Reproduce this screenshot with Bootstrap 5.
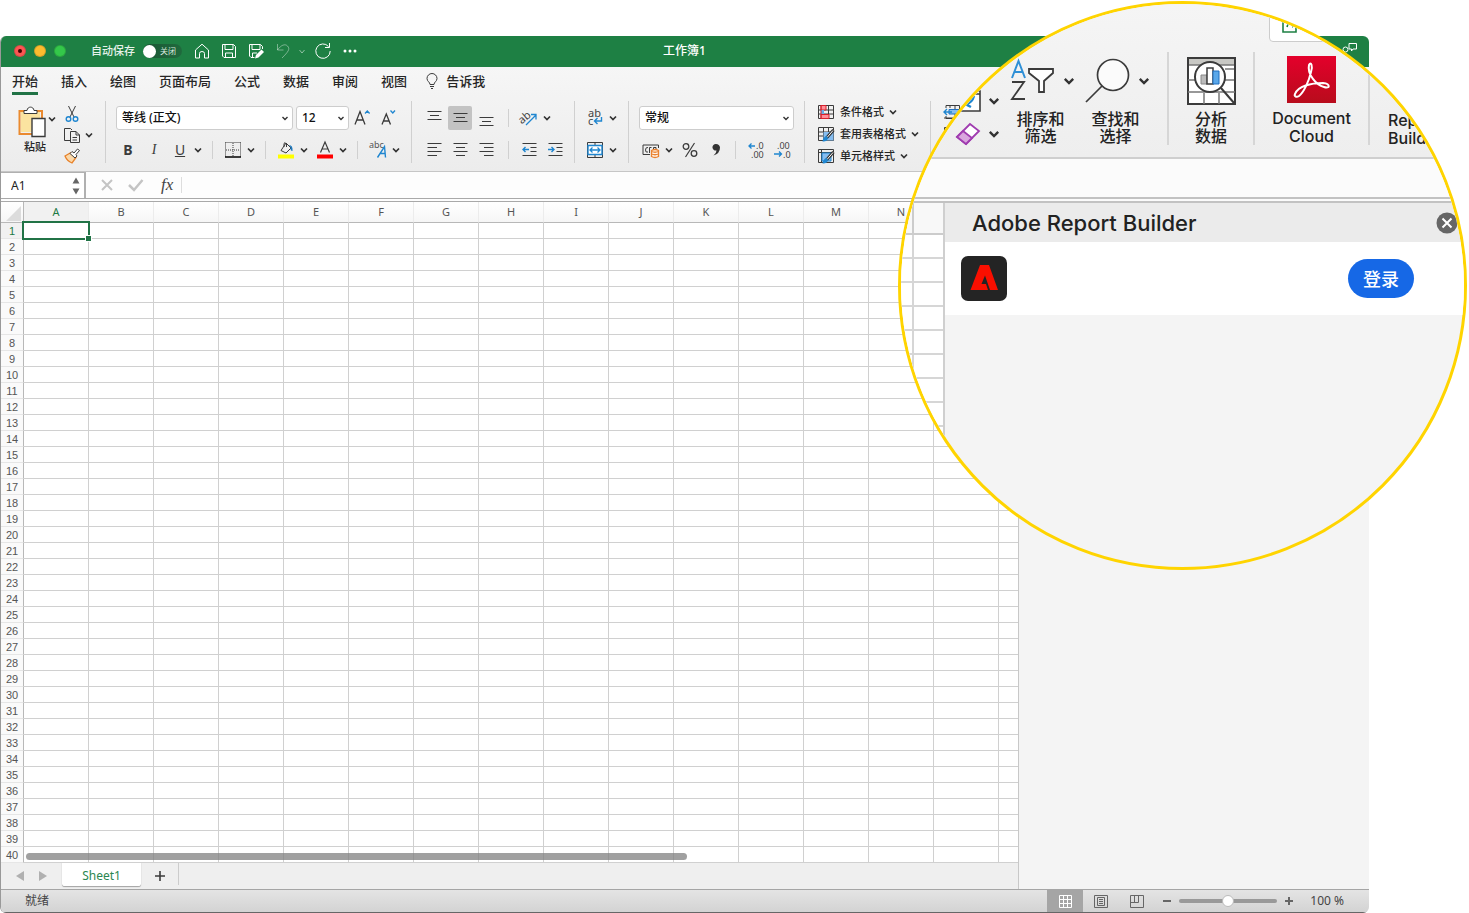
<!DOCTYPE html>
<html lang="zh-CN">
<head>
<meta charset="utf-8">
<meta name="viewport" content="width=device-width, initial-scale=1">
<title>工作簿1</title>
<link rel="stylesheet" href="https://cdn.jsdelivr.net/npm/bootstrap@5.3.0/dist/css/bootstrap.min.css">
<style>
  body { font-family: "Noto Sans", "Noto Sans CJK SC", sans-serif; font-size: 12px; line-height: 16px; color: #262626; background: #fff; }
  button { background: none; border: 0; padding: 0; color: inherit; font-weight: inherit; display: inline-flex; align-items: center; justify-content: center; }
  svg { display: block; flex: none; overflow: visible; fill: none; stroke: #3b3b3b; }
  .desk { padding: 36px 100px 0 0; overflow: hidden; }
  .win { border-left: 1px solid #999; border-radius: 6px; overflow: hidden; }

  .titlebar { height: 31px; background: #1e8044; color: #fff; margin-left: -1px; padding: 0 12px 1px 14px; }
  .titlebar svg { stroke: #fff; }
  .doctitle { font-weight: 500; }
  .lamp { width: 12px; height: 12px; border-radius: 50%; border: 1px solid rgba(0,0,0,.15); }
  .lamp-r { background: #fc5753; } .lamp-y { background: #fdbc2f; } .lamp-g { background: #34c84a; }
  .autosave { font-size: 11px; font-weight: 500; color: #e6f2ea; margin-left: 25px; }
  .toggle { width: 39px; height: 14px; border-radius: 7px; background: linear-gradient(90deg,#1a5534,#1f6a3d); }
  .toggle input { appearance: none; margin: 0; width: 13px; height: 13px; border-radius: 50%; background: #fff; }
  .toggle span { font-size: 8px; line-height: 14px; color: #d9e8de; padding-left: 4px; }
  .quick { gap: 11px; }
  .quick button { width: 16px; height: 16px; }
  .quick .tiny { margin: 0 -2px 0 -4px; }

  .ribbon { background: linear-gradient(#f6f6f6,#ececec); border-bottom: 1px solid #c6c6c6; height: 105px; }
  .tabs { height: 34px; padding: 4px 0 0 11px; gap: 23px; font-size: 13px; line-height: 20px; font-weight: 500; }
  .tabs a { color: #262626; text-decoration: none; padding-bottom: 1px; white-space: nowrap; }
  .tabs a.active { border-bottom: 3px solid #217346; }
  .tabs a.tell { margin-left: -4px; }
  .tools { height: 62px; }
  .toolgroup { border-left: 1px solid #d0d0d0; padding: 5px 10px 0; display: flex; flex-direction: column; gap: 8px; flex: none; }
  .toolgroup.slim { padding-right: 9px; }
  .toolrow { display: flex; align-items: center; height: 24px; gap: 6px; }
  .toolrow.inset { padding-left: 2px; }
  .toolrow.tight { gap: 2px; }
  .toolrow.close-set { gap: 3px; }
  .tb { width: 20px; height: 24px; }
  .tb.wide { width: 24px; }
  .tb.on { background: #c3c3c3; border-radius: 2px; }
  .dd { display: inline-flex; gap: 3px; width: 33px; height: 24px; }
  .dd > svg:first-child, .dd > span { width: 20px; }
  .vr-s { width: 1px; height: 18px; background: #d0d0d0; margin: 0 4px 0 3px; flex: none; }
  .box { height: 24px; font-size: 12px; line-height: 16px; font-weight: 500; color: #111; padding: 3px 16px 3px 5px; border: 1px solid #cdcdcd; border-radius: 3px; background-color: #fff; background-position: right 3px center; background-size: 8px 8px;
    background-image: url("data:image/svg+xml,%3Csvg xmlns='http://www.w3.org/2000/svg' viewBox='0 0 8 8'%3E%3Cpath d='M1.5 3 4 5.5 6.5 3' fill='none' stroke='%23333' stroke-width='1.4'/%3E%3C/svg%3E"); }
  .box-font { width: 177px; } .box-size { width: 53px; } .box-num { width: 155px; }
  .glyph { font-size: 14px; line-height: 18px; color: #3b3b3b; }
  .serif { font-family: "Liberation Serif", serif; }
  .clip { width: 104px; padding: 5px 0 0 17px; gap: 1px; }
  .clip .side { height: 16px; gap: 4px; margin-bottom: 5px; }
  .clip .sides { padding-left: 6px; }
  .paste { font-size: 11px; line-height: 18px; font-weight: 500; padding-left: 6px; margin-right: -2px; }
  .styles { gap: 6px; padding: 3px 12px 0 13px; width: 126px; white-space: nowrap; font-size: 11px; font-weight: 500; }
  .styles button { height: 16px; gap: 4px; justify-content: flex-start; }
  .styles button svg:first-child { margin-right: 2px; }

  .formula { height: 30px; background: #fdfdfd; border-bottom: 1px solid #a9a9a9; }
  .formula .inner { height: 27px; border-bottom: 1px solid #a9a9a9; }
  .namebox { width: 85px; height: 26px; border: solid #b0b0b0; border-width: 1px 2px 0 0; background: #fff; }
  .namebox input { border: 0; width: 62px; padding: 0 0 0 10px; color: #222; background: none; }
  .enter { margin: 0 18px 0 17px; }
  .fx { font: italic 17px/20px "Liberation Serif", serif; color: #444; }
  .formula .entry { border: 0; background: none; border-left: 1px solid #ddd; height: 16px; }

  .grid-wrap { overflow: hidden; position: relative; }
  .cells { table-layout: fixed; width: 1063px; border-collapse: separate; border-spacing: 0; font-family: "Liberation Sans", sans-serif; color: #555; }
  .cells th { font-weight: 400; font-size: 11px; text-align: center; padding: 0; background: #fafafa; }
  .cells thead th { font-family: "Noto Sans", sans-serif; height: 21px; line-height: 20px; border-right: 1px solid #ececec; border-bottom: 1px solid #b8b8b8; background: linear-gradient(#fff,#f6f6f6); width: 65px; }
  .cells thead th:first-child { width: 23px; border-right-color: #b8b8b8; }
  .cells thead svg { margin: 3px 0 0 5px; }
  .cells tbody th { height: 16px; line-height: 13px; padding-top: 2px; border-right: 1px solid #b8b8b8; border-bottom: 1px solid #e6e6e6; }
  .cells td { padding: 0; border-right: 1px solid #d0d0d0; border-bottom: 1px solid #d0d0d0; }
  .cells th.cur { color: #1e7a45; background: #f1f1f1; }
  .cells td.cur { position: relative; }
  .cells td.cur::before { content: ""; position: absolute; inset: -2px; border: 2px solid #217346; }
  .cells td.cur::after { content: ""; position: absolute; right: -4px; bottom: -4px; width: 7px; height: 7px; background: #217346; border: 1px solid #fff; }
  .hscroll { position: absolute; left: 25px; bottom: 3px; width: 65%; height: 7px; border-radius: 4px; background: rgba(128,128,128,.75); }

  .sheetbar { height: 26px; background: #efefef; }
  .arrows { gap: 15px; padding-left: 15px; margin-right: 15px; }
  .sheettab { width: 79px; height: 24px; background: #fff; color: #2a8650; border-bottom: 1px solid #aaa; border-radius: 0 0 3px 3px; box-shadow: 0 0 1px #999; text-decoration: none; text-align: center; line-height: 25px; }
  .newtab { padding: 0 13px 0 14px; }
  .tabend { border-left: 1px solid #ccc; height: 22px; }
  .pane { width: 351px; border-left: 1px solid #c8c8c8; background: #f4f4f4; }

  .status { height: 24px; background: linear-gradient(#e4e4e4,#d3d3d3); border-top: 1px solid #a5a5a5; border-bottom: 1px solid #666; color: #444; padding: 0 25px 0 24px; }
  .status svg { stroke: #666; }
  .view { width: 36px; height: 22px; }
  .view.on { background: #a5a5a5; }
  .view.on svg { stroke: #fff; }
  .percent { margin-left: 17px; }
  .zoomer { appearance: none; width: 98px; height: 14px; background: none; margin: 0 8px; }
  .zoomer::-webkit-slider-runnable-track { height: 4px; border-radius: 2px; background: #999; }
  .zoomer::-webkit-slider-thumb { appearance: none; width: 12px; height: 12px; margin-top: -4px; border-radius: 50%; background: #fff; border: 1px solid #bbb; }

  /* magnifying lens that lies over the window */
  .lens { position: absolute; top: 1px; right: 2px; width: 569px; height: 569px; border: 3px solid #ffd400; border-radius: 50%; overflow: hidden; background: #f4f4f4; font-size: 16px; line-height: 17px; color: #222; font-weight: 500; }
  .lens .top { height: 155px; background: linear-gradient(#f5f5f5,#eeeeee); border-bottom: 2px solid #cfcfcf; }
  .share { height: 38px; width: 140px; margin-left: 368px; border: 1px solid #ccc; border-radius: 4px; background: #fff; padding: 0 0 8px 12px; justify-content: flex-start; align-items: flex-end; }
  .big { height: 93px; margin-top: 10px; }
  .big button { flex-direction: column; justify-content: flex-start; white-space: nowrap; }
  .big .pic { height: 61px; display: flex; align-items: center; gap: 9px; padding-bottom: 2px; }
  .vr-b { width: 2px; background: #d6d6d6; }
  .col-a { width: 98px; padding: 38px 0 0 54px; gap: 11px; }
  .lens .col-a button { flex-direction: row; gap: 6px; height: 22px; }
  .pair { width: 67px; margin-left: 8px; }
  .pair .pic { padding-left: 4px; }
  .first-rule { margin-left: 18px; }
  .an { width: 84px; } .doc { width: 113px; } .rep { padding: 59px 0 0 18px; }
  .latin { font-family: Inter, sans-serif; font-size: 16px; line-height: 18px; }
  .doc .latin { margin-top: 1px; }
  .lens .bar { height: 44px; background: #fbfbfb; border-bottom: 2px solid #c2c2c2; }
  .lens .bar div { height: 40px; border-bottom: 2px solid #c2c2c2; }
  .mini { width: 44px; height: 230px; border-collapse: separate; border-spacing: 0; background: #fff; border-right: 2px solid #cfcfcf; }
  .mini td { height: 24px; padding: 0; border-bottom: 2px solid #d6d6d6; }
  .mini td:first-child { width: 13px; border-right: 2px solid #d6d6d6; }
  .mini tr:first-child td { height: 32px; background: #f8f8f8; border-color: #ccc; }
  .ptitle { height: 39px; background: #ebebeb; padding: 0 6px 0 27px; }
  .ptitle h1 { font: 500 22px/26px Inter, sans-serif; color: #222; margin: 0; }
  .pbody { height: 73px; background: #fff; padding: 0 50px 0 16px; }
  .login { width: 66px; height: 39px; border-radius: 20px; background: #1668e6; color: #fff; font-size: 18px; line-height: 24px; }
</style>
</head>
<body>
<svg width="0" height="0" class="position-absolute" aria-hidden="true">
  <symbol id="chev" viewBox="0 0 10 10"><path d="M2 3.5 5 6.5 8 3.5" fill="none" stroke="#333" stroke-width="1.7"/></symbol>
</svg>
<div class="position-relative">
<div class="desk">
<div class="win">
  <header class="titlebar d-flex align-items-center position-relative">
    <div class="d-flex gap-2"><span class="lamp lamp-r d-flex align-items-center justify-content-center"><svg width="4" height="4"><circle cx="2" cy="2" r="2" fill="#400" stroke="none"/></svg></span><span class="lamp lamp-y"></span><span class="lamp lamp-g"></span></div>
    <label for="auto" class="autosave me-2">自动保存</label>
    <div class="toggle d-flex align-items-center me-2"><input type="checkbox" id="auto"><span>关闭</span></div>
    <div class="quick d-flex align-items-center ms-1">
      <button aria-label="主页"><svg width="16" height="16"><path d="M1.500 7 8 1.200 14.500 7V15H10.500V10.500Q10.500 8.500 8 8.500T5.500 10.500V15H1.500Z"/></svg></button>
      <button aria-label="保存"><svg width="16" height="16"><path d="M1.500 1.500H12.500L14.500 3.500V14.500H3L1.500 13ZM4 1.500V6.500H12V1.500M4.500 14.500V10H11.500V14.500"/></svg></button>
      <button aria-label="另存为"><svg width="16" height="16"><path d="M6.500 14.500H3L1.500 13V1.500H12.500L14.500 3.500V6M4 1.500V6.500H12V1.500M4.500 14.500V10H9"/><path d="M7 15.500 8 12 13.500 6.500 16 9 10.500 14.500Z" fill="#fff" stroke="none"/></svg></button>
      <button aria-label="撤消"><svg width="14" height="16" opacity=".4"><path d="M1.500 1V7H7.500M1.500 7C5 2 9 .500 11.500 3 14.500 6 12 9 6 15"/></svg></button>
      <svg class="tiny" width="8" height="8" opacity=".5"><path d="M1.500 3 4 6 6.500 3"/></svg>
      <button aria-label="重做"><svg width="16" height="16"><path d="M13.500 3.500A7.200 7.200 0 1 0 15.200 8M14.500 0V4.500H10"/></svg></button>
      <button aria-label="更多"><svg width="14" height="4"><g fill="#fff" stroke="none"><circle cx="2" cy="2" r="1.500"/><circle cx="7" cy="2" r="1.500"/><circle cx="12" cy="2" r="1.500"/></g></svg></button>
    </div>
    <div class="doctitle position-absolute start-50 translate-middle-x">工作簿1</div>
    <button class="ms-auto" aria-label="共享"><svg width="16" height="18"><path d="M8 1.500H15.500V7H12L10.500 9V7H8ZM1 16V12H6"/><circle cx="4.500" cy="7.500" r="2.500"/></svg></button>
  </header>

  <section class="ribbon">
    <nav class="tabs d-flex align-items-start">
      <a href="#" class="active">开始</a><a href="#">插入</a><a href="#">绘图</a><a href="#">页面布局</a><a href="#">公式</a><a href="#">数据</a><a href="#">审阅</a><a href="#">视图</a>
      <a href="#" class="tell d-flex align-items-center gap-2"><svg width="12" height="16"><path d="M4 11.500C4 9 1 8.500 1 5.500A5 5 0 0 1 11 5.500C11 8.500 8 9 8 11.500ZM4 13.500H8M5 15.500H7"/></svg>告诉我</a>
    </nav>
    <div class="tools d-flex">
      <div class="clip d-flex">
        <div>
          <button class="d-flex" aria-label="粘贴菜单"><svg width="28" height="32"><path d="M7 5H1.500V28H16M19 5H24V12" stroke="#ea8a2f" stroke-width="2"/><path d="M3 6H22V13H14V26H3Z" fill="#fbe3a0" stroke="none"/><path d="M6 7.500V4.500H9C9.500 0 15.500 0 16 4.500H19V7.500Z" fill="#fff"/><path d="M14 12.500H27V30.500H14Z" fill="#fff" stroke-width="1.400"/></svg></button>
          <div class="paste">粘贴</div>
        </div>
        <svg width="10" height="10" class="mt-2"><use href="#chev"/></svg>
        <div class="sides">
          <button class="side d-flex" aria-label="剪切"><svg width="16" height="16"><path d="M4.500 0 10 11M11.500 0 6 11"/><circle cx="4.500" cy="13" r="2.300" stroke="#1f86d0" stroke-width="1.400"/><circle cx="11.500" cy="13" r="2.300" stroke="#1f86d0" stroke-width="1.400"/></svg></button>
          <button class="side d-flex" aria-label="复制"><svg width="16" height="16"><path d="M6 13.500H.500V1.500H6.500L8 3M6.500 4.500H12L15.500 8V15.500H6.500ZM12 4.500V8H15.500M8.500 10.500H13M8.500 13H13"/></svg><svg width="10" height="10"><use href="#chev"/></svg></button>
          <button class="side d-flex" aria-label="格式刷"><svg width="16" height="16"><path d="M1 8 7 4.500 12 9.500 8 15Q3 13 1 8Z" fill="#fbd8a8" stroke="#e8822a" stroke-width="1.300"/><path d="M6 5.500 8 3.500 10 5 13.500 1 15.500 2.500 12 6.500 13 8 11 10Z" fill="#fff"/></svg></button>
        </div>
      </div>

      <div class="toolgroup">
        <div class="toolrow close-set">
          <select class="form-select box box-font" aria-label="字体"><option>等线 (正文)</option></select>
          <select class="form-select box box-size" aria-label="字号"><option>12</option></select>
          <button class="tb" aria-label="增大字号"><svg width="18" height="18"><path d="M2 15.500 7 2.500 12 15.500M3.800 11H10.200" stroke-width="1.300"/><path d="M12 4.500 14.300 2 16.600 4.500" stroke="#1f86d0" stroke-width="1.300"/></svg></button>
          <button class="tb ms-1" aria-label="减小字号"><svg width="18" height="18"><path d="M2 15.500 6.300 5 10.500 15.500M3.500 12H9" stroke-width="1.300"/><path d="M10.500 1.500 12.800 4 15 1.500" stroke="#1f86d0" stroke-width="1.300"/></svg></button>
        </div>
        <div class="toolrow inset">
          <button class="tb glyph fw-bold">B</button>
          <button class="tb glyph serif fst-italic">I</button>
          <button class="dd glyph"><span class="text-decoration-underline">U</span><svg width="10" height="10"><use href="#chev"/></svg></button>
          <i class="vr-s"></i>
          <button class="dd" aria-label="边框"><svg width="16" height="16" viewBox="0 0 16 16"><path d="M.500 .500H15.500M.500 .500V15M15.500 .500V15M8 1V15M1 8H15" stroke-dasharray="1 1"/><path d="M0 15H16" stroke="#000" stroke-width="1.500"/></svg><svg width="10" height="10"><use href="#chev"/></svg></button>
          <i class="vr-s"></i>
          <button class="dd" aria-label="填充颜色"><svg width="16" height="16" viewBox="0 0 16 16"><path d="M8 1 13 6 8 11 3 8.500ZM6 5V1.500Q7-.500 8.500 2V5"/><path d="M11 3Q15 3 14.500 9 12 9 12.500 5Z" fill="#1f7abf" stroke="none"/><path d="M0 14.500H16" stroke="#ff0" stroke-width="4"/></svg><svg width="10" height="10"><use href="#chev"/></svg></button>
          <button class="dd" aria-label="字体颜色"><svg width="16" height="16" viewBox="0 0 16 16"><path d="M3.500 10.500 8 0 12.500 10.500M5.200 7H10.800" stroke-width="1.200"/><path d="M0 14.500H16" stroke="red" stroke-width="4"/></svg><svg width="10" height="10"><use href="#chev"/></svg></button>
          <i class="vr-s"></i>
          <button class="dd" aria-label="文字效果"><svg width="18" height="18" viewBox="0 0 18 18"><text x="0" y="7" font-size="9" fill="#555" stroke="none">abc</text><path d="M8.500 16.500 15.500 5.500 16.500 16.500M11 12.500H16" stroke="#1f86d0" stroke-width="1.400"/></svg><svg width="10" height="10"><use href="#chev"/></svg></button>
        </div>
      </div>

      <div class="toolgroup slim">
        <div class="toolrow tight">
          <button class="tb wide" aria-label="顶端对齐"><svg width="15" height="16"><path d="M.500 1.500H14.500M3 5.500H12M.500 9.500H14.500"/></svg></button>
          <button class="tb wide on" aria-label="垂直居中"><svg width="15" height="16"><path d="M.500 3.500H14.500M3 7.500H12M.500 11.500H14.500"/></svg></button>
          <button class="tb wide" aria-label="底端对齐"><svg width="15" height="16"><path d="M.500 7.500H14.500M3 11.500H12M.500 15.500H14.500"/></svg></button>
          <i class="vr-s mx-2"></i>
          <button class="dd" aria-label="方向"><svg width="18" height="18" viewBox="0 0 18 18"><text x="-1" y="12" font-size="11" fill="#444" stroke="none" transform="rotate(-40 5 10)">ab</text><path d="M6 16 16 6M16 10.500V5.500H11" stroke="#1f86d0" stroke-width="1.300"/></svg><svg width="10" height="10"><use href="#chev"/></svg></button>
        </div>
        <div class="toolrow tight">
          <button class="tb wide" aria-label="左对齐"><svg width="15" height="16"><path d="M.500 1.500H14.500M.500 5.500H10M.500 9.500H14.500M.500 13.500H10"/></svg></button>
          <button class="tb wide" aria-label="居中"><svg width="15" height="16"><path d="M.500 1.500H14.500M3 5.500H12M.500 9.500H14.500M3 13.500H12"/></svg></button>
          <button class="tb wide" aria-label="右对齐"><svg width="15" height="16"><path d="M.500 1.500H14.500M5 5.500H14.500M.500 9.500H14.500M5 13.500H14.500"/></svg></button>
          <i class="vr-s mx-2"></i>
          <button class="tb" aria-label="减少缩进"><svg width="15" height="16"><path d="M.500 1.500H14.500M8.500 5.500H14.500M8.500 9.500H14.500M.500 13.500H14.500"/><path d="M7 7.500H1M3.500 5 1 7.500 3.500 10" stroke="#1f86d0" stroke-width="1.400"/></svg></button>
          <button class="tb ms-1" aria-label="增加缩进"><svg width="15" height="16"><path d="M.500 1.500H14.500M8.500 5.500H14.500M8.500 9.500H14.500M.500 13.500H14.500"/><path d="M0 7.500H6M3.500 5 6 7.500 3.500 10" stroke="#1f86d0" stroke-width="1.400"/></svg></button>
        </div>
      </div>

      <div class="toolgroup">
        <div class="toolrow"><button class="dd" aria-label="自动换行"><svg width="16" height="18" viewBox="0 0 16 18"><text x="1" y="8" font-size="11" fill="#444" stroke="none">ab</text><text x="1" y="16" font-size="11" fill="#444" stroke="none">c</text><path d="M14.500 8V12H8M10.500 9 7.500 12 10.500 15" stroke="#1f86d0" stroke-width="1.400"/></svg><svg width="10" height="10"><use href="#chev"/></svg></button></div>
        <div class="toolrow"><button class="dd" aria-label="合并"><svg width="16" height="16" viewBox="0 0 16 16"><path d="M.500 .500H15.500V15.500H.500ZM8 0V4M8 12V16"/><path d="M1 3.500H15V12.500H1Z" fill="#fff" stroke="#1f86d0" stroke-width="1.400"/><path d="M3 8H13M5.500 5.500 3 8 5.500 10.500M10.500 5.500 13 8 10.500 10.500" stroke="#1f86d0" stroke-width="1.300"/></svg><svg width="10" height="10"><use href="#chev"/></svg></button></div>
      </div>

      <div class="toolgroup">
        <div class="toolrow"><select class="form-select box box-num" aria-label="数字格式"><option>常规</option></select></div>
        <div class="toolrow inset">
          <button class="dd" aria-label="会计格式"><svg width="18" height="16" viewBox="0 0 18 16"><path d="M8 12.500H1V3H16.500V6M6 5.500Q3.500 5 3.500 8T6 10M7.500 11V5.500H9.500M11.500 7V5.500H14V7"/><path d="M9.500 8.500V14.500Q13 16.500 16.500 14.500V8.500Q13 6.500 9.500 8.500ZM9.500 9.500Q13 11 16.500 9.500M9.500 12Q13 13.500 16.500 12" stroke="#ea8230" stroke-width="1.300" fill="#fff3e8"/></svg><svg width="10" height="10"><use href="#chev"/></svg></button>
          <button class="tb" aria-label="百分比"><svg width="16" height="16"><circle cx="4" cy="4.500" r="2.800" stroke-width="1.300"/><circle cx="12" cy="11.500" r="2.800" stroke-width="1.300"/><path d="M12.500 1 3.500 15" stroke-width="1.200"/></svg></button>
          <button class="tb" aria-label="千位分隔"><svg width="10" height="14"><path d="M5 1A3.300 3.300 0 1 0 5.500 7.500Q5.500 10 2.500 12.500 9 10.500 9 4.500 8.500 1 5 1Z" fill="#333" stroke="none"/></svg></button>
          <i class="vr-s"></i>
          <button class="tb" aria-label="增加小数位"><svg width="17" height="17"><text x="8" y="7" font-size="9" fill="#444" stroke="none">.0</text><text x="3" y="16" font-size="9" fill="#444" stroke="none">.00</text><path d="M7 4H1M3.500 1.500 1 4 3.500 6.500" stroke="#1f86d0" stroke-width="1.300"/></svg></button>
          <button class="tb" aria-label="减少小数位"><svg width="17" height="17"><text x="3" y="7" font-size="9" fill="#444" stroke="none">.00</text><text x="9" y="16" font-size="9" fill="#444" stroke="none">.0</text><path d="M0 12H7M5 9.500 7.500 12 5 14.500" stroke="#1f86d0" stroke-width="1.300"/></svg></button>
        </div>
      </div>

      <div class="toolgroup styles">
        <button><svg width="16" height="16"><path d="M.500 1.500H15.500V14.500H.500ZM5.500 1V15M10.500 1V15M0 6H16M0 10H16"/><path d="M3 1.500H8V6H3ZM3 10.500H11V14.500H3Z" fill="#ff8f98" stroke="#d8202c"/><path d="M3 6H6V10H3Z" fill="#64b0ea" stroke="none"/><path d="M3 1V15" stroke="#d8202c"/></svg>条件格式<svg width="10" height="10"><use href="#chev"/></svg></button>
        <button><svg width="16" height="16"><path d="M.500 1.500H15.500V14.500H.500ZM5.500 1V15M10.500 1V15M0 6H16M0 10H16"/><path d="M5.500 6H15.500V14.500H5.500Z" fill="#86bdf0" stroke="none"/><path d="M15.500 4 8.500 12" stroke="#333" stroke-width="3"/><path d="M15 4.500 9 11.500" stroke="#fff"/><path d="M8.500 10Q5 11 4.500 15.500 9 16 10 12Z" fill="#1f86d0" stroke="none"/></svg>套用表格格式<svg width="10" height="10"><use href="#chev"/></svg></button>
        <button><svg width="16" height="16"><path d="M.500 1.500H15.500V14.500H.500ZM3.500 1V15M0 4.500H16"/><path d="M4 5H13V13H4Z" fill="#86bdf0" stroke="#1f86d0"/><path d="M15.500 4 8.500 12" stroke="#333" stroke-width="3"/><path d="M15 4.500 9 11.500" stroke="#fff"/><path d="M8.500 10Q5 11 4.500 15.500 9 16 10 12Z" fill="#1f86d0" stroke="none"/></svg>单元格样式<svg width="10" height="10"><use href="#chev"/></svg></button>
      </div>
      <div class="toolgroup styles">
        <button aria-label="插入单元格"><svg width="16" height="16"><path d="M2 4V1.500H15.500V14.500H2V12M6 1V4M11 1V15M0 14H16"/><path d="M5 5.500H16V10H5Z" fill="#86bdf0" stroke="#1f6fc0"/><path d="M8 8H0M3 5 0 8 3 11" stroke="#1f86d0" stroke-width="1.400"/></svg></button>
        <button aria-label="删除单元格"><svg width="16" height="16"><path d="M.500 14.500V1.500H8M0 6H6"/></svg></button>
      </div>
    </div>
  </section>

  <section class="formula">
    <div class="inner d-flex align-items-center">
      <div class="namebox d-flex align-items-center"><input value="A1" aria-label="名称框"><svg width="8" height="20" class="ms-auto me-1"><path d="M4 1.500 7.500 7.500H.500ZM4 18.500 7.500 12.500H.500Z" fill="#666" stroke="none"/></svg></div>
      <button class="ms-3" aria-label="取消"><svg width="10" height="10"><path d="M0 0 10 10M10 0 0 10" stroke="#c4c4c4" stroke-width="2"/></svg></button>
      <button class="enter" aria-label="输入"><svg width="14" height="12"><path d="M0 6 5 11 13.500 1" stroke="#c4c4c4" stroke-width="2.500"/></svg></button>
      <button class="fx me-2">fx</button>
      <input class="entry flex-grow-1" aria-label="编辑栏">
    </div>
  </section>

  <main class="d-flex">
    <div class="flex-grow-1 overflow-hidden">
      <div class="grid-wrap">
        <table class="cells"><thead><tr id="head"><th aria-label="全选"><svg width="15" height="15"><path d="M15 0V15H0Z" fill="#dcdcdc" stroke="none"/></svg></th></tr></thead><tbody id="rows"></tbody></table>
        <div class="hscroll"></div>
      </div>
      <div class="sheetbar d-flex align-items-start">
        <div class="arrows d-flex align-self-center"><svg width="8" height="10"><path d="M8 0V10L0 5Z" fill="#b0b0b0" stroke="none"/></svg><svg width="8" height="10"><path d="M0 0V10L8 5Z" fill="#b0b0b0" stroke="none"/></svg></div>
        <a class="sheettab" href="#">Sheet1</a>
        <button class="newtab align-self-center" aria-label="新建工作表"><svg width="10" height="10"><path d="M5 0V10M0 5H10" stroke-width="1.600"/></svg></button>
        <span class="tabend"></span>
      </div>
    </div>
    <aside class="pane flex-shrink-0"></aside>
  </main>

  <footer class="status d-flex align-items-center">
    <span>就绪</span>
    <button class="view on ms-auto" aria-label="普通"><svg width="13" height="13"><path d="M.500 .500H12.500V12.500H.500ZM4.500 0V13M8.500 0V13M0 4.500H13M0 8.500H13"/></svg></button>
    <button class="view" aria-label="页面布局视图"><svg width="14" height="13"><path d="M.500 .500H13.500V12.500H.500ZM3.500 2.500H10.500V10.500H3.500ZM5 4.500H9M5 6.500H9M5 8.500H9"/></svg></button>
    <button class="view me-2" aria-label="分页预览"><svg width="14" height="13"><path d="M.500 .500H13.500V12.500H.500ZM.500 7.500H8.500V.500M4.500 .500V7.500"/></svg></button>
    <button aria-label="缩小"><svg width="8" height="8"><path d="M0 4H8" stroke-width="2"/></svg></button>
    <input type="range" class="zoomer" aria-label="缩放">
    <button aria-label="放大"><svg width="8" height="8"><path d="M0 4H8M4 0V8" stroke-width="2"/></svg></button>
    <span class="percent">100 %</span>
  </footer>
</div>
</div>

<section class="lens">
  <div class="top">
    <button class="share" aria-label="共享工作簿"><svg width="16" height="18"><path d="M3 3H1V17H14V12M5 12Q6 7 11 6V3L15 7 11 11V9" stroke="#1e8044" stroke-width="1.600"/></svg></button>
    <div class="big d-flex">
      <div class="col-a d-flex flex-column">
        <button aria-label="填充"><svg width="26" height="22"><path d="M3 1H25V21H3ZM3 4H25" fill="#fff" stroke-width="1.600"/><path d="M19 6Q17 13 11 14M15 9 10 14 16 17" stroke="#1f86d0" stroke-width="2.500"/></svg><svg width="14" height="14"><use href="#chev"/></svg></button>
        <button aria-label="清除"><svg width="26" height="22"><path d="M15 1 24 8 11 21 2 14Z" fill="#fff" stroke="#a03cb0" stroke-width="1.800"/><path d="M8 8 17 15 11 21 2 14Z" fill="#d9a6de" stroke="#a03cb0" stroke-width="1.800"/></svg><svg width="14" height="14"><use href="#chev"/></svg></button>
      </div>
      <button class="pair"><span class="pic"><svg width="44" height="42"><path d="M3 18 9.500 1 16 18M5 12H14" stroke="#2e8fd6" stroke-width="2"/><path d="M3 22H15L3 39H16" stroke-width="1.800"/><path d="M20 9H44V13L35 21V32H30V21L20 13Z" fill="#fff" stroke-width="1.800"/></svg><svg width="14" height="14"><use href="#chev"/></svg></span><span>排序和<br>筛选</span></button>
      <button class="pair"><span class="pic"><svg width="44" height="44"><circle cx="29" cy="16" r="15.500" fill="#fbfbfb" stroke-width="1.700"/><path d="M18 27 2 43" stroke-width="1.700"/></svg><svg width="14" height="14"><use href="#chev"/></svg></span><span>查找和<br>选择</span></button>
      <i class="vr-b first-rule"></i>
      <button class="an"><span class="pic"><svg width="49" height="48"><path d="M1 1H48V47H1Z" fill="#fff" stroke-width="2"/><path d="M2 2H47V8H2Z" fill="#c8c8c4" stroke="none"/><path d="M1 23H10M1 35H48M38 12H47M38 23H47M17 36V47M32 36V47M2 8H47" stroke="#777" stroke-width="1.500"/><circle cx="23" cy="20" r="15" fill="#fff" stroke-width="2"/><path d="M34 31 47 46" stroke-width="2"/><path d="M14 18H20V27H14Z" fill="#bbb" stroke="#888"/><path d="M20 11H26V27H20Z" fill="#fff" stroke-width="1.500"/><path d="M26 14H32V27H26Z" fill="#5aa8ea" stroke="#1f6fc0"/></svg></span><span>分析<br>数据</span></button>
      <i class="vr-b"></i>
      <button class="doc"><span class="pic"><svg width="49" height="47"><linearGradient id="red" x2="0" y2="1"><stop stop-color="#e4002b"/><stop offset="1" stop-color="#b80c1c"/></linearGradient><path d="M0 0H49V47H0Z" fill="url(#red)" stroke="none"/><path d="M8 38C11 30 24 27 36 27 44 28 43 33 37 31 29 29 20 18 22 9 24 5 26 10 24 16 22 25 17 36 12 40 9 42 7 40 8 38Z" stroke="#fff" stroke-width="2"/></svg></span><span class="latin">Document<br>Cloud</span></button>
      <i class="vr-b"></i>
      <div class="rep latin">Report<br>Builder</div>
    </div>
  </div>
  <div class="bar"><div></div></div>
  <div class="d-flex align-items-start">
    <table class="mini" aria-hidden="true"><tbody id="mini"></tbody></table>
    <div class="flex-grow-1">
      <div class="ptitle d-flex align-items-center justify-content-between"><h1>Adobe Report Builder</h1><button aria-label="关闭"><svg width="22" height="22"><circle cx="11" cy="11" r="10.500" fill="#666" stroke="none"/><path d="M6.500 6.500 15.500 15.500M15.500 6.500 6.500 15.500" stroke="#fff" stroke-width="2"/></svg></button></div>
      <div class="pbody d-flex align-items-center justify-content-between"><svg width="46" height="46"><rect width="46" height="45" rx="7" fill="#242424" stroke="none"/><path d="M19 9H28L37 34H29L24 19.500 20.500 28H25L27 34H9.500Z" fill="#fa0f00" stroke="none"/></svg><button class="login">登录</button></div>
    </div>
  </div>
</section>
</div>
<script>
  const letters = "ABCDEFGHIJKLMNOP".split("");
  document.getElementById("head").insertAdjacentHTML("beforeend", letters.map((c, i) => `<th${i ? "" : ' class="cur"'}>${c}</th>`).join(""));
  let html = "";
  for (let r = 1; r <= 40; r++)
    html += `<tr><th${r === 1 ? ' class="cur"' : ""}>${r}</th>` + letters.map((c, i) => `<td${r === 1 && i === 0 ? ' class="cur"' : ""}></td>`).join("") + "</tr>";
  document.getElementById("rows").innerHTML = html;
  document.getElementById("mini").innerHTML = "<tr><td></td><td></td></tr>".repeat(10);
</script>
<script src="https://cdn.jsdelivr.net/npm/bootstrap@5.3.0/dist/js/bootstrap.bundle.min.js"></script>
</body>
</html>
